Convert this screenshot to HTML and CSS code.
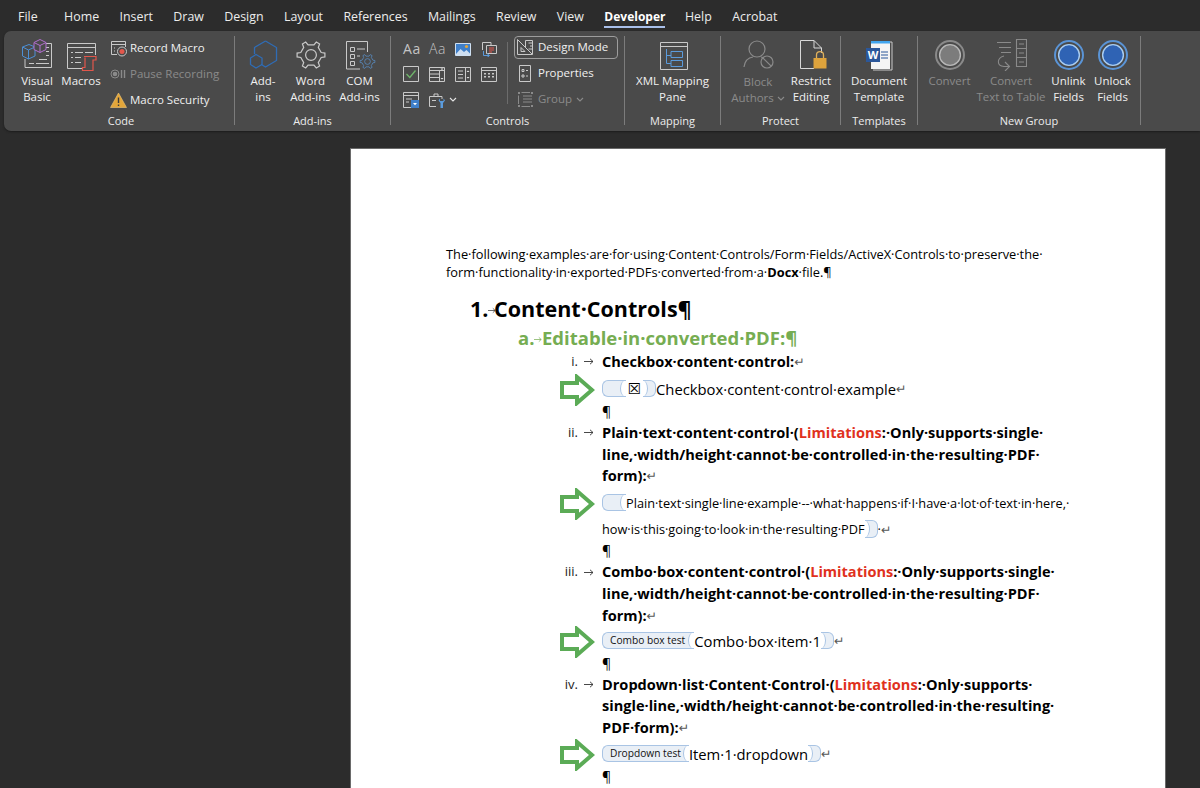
FILE: index.html
```html
<!DOCTYPE html>
<html lang="en">
<head>
<meta charset="utf-8">
<title>Developer ribbon</title>
<link rel="stylesheet" href="styles.css">
</head>
<body>
<svg class="defs" width="0" height="0" aria-hidden="true">
  <symbol id="gear" viewBox="-16 -16 32 32">
    <polygon points="10.2,-2.5 13.9,-1.9 13.9,1.9 10.2,2.5 7.27,7.58 8.6,11.09 5.3,12.99 2.94,10.08 -2.94,10.08 -5.3,12.99 -8.6,11.09 -7.27,7.58 -10.2,2.5 -13.9,1.9 -13.9,-1.9 -10.2,-2.5 -7.27,-7.58 -8.6,-11.09 -5.3,-12.99 -2.94,-10.08 2.94,-10.08 5.3,-12.99 8.6,-11.09 7.27,-7.58" fill="none" stroke-width="1.2"/>
    <circle r="5.4" fill="none" stroke-width="1.2"/>
  </symbol>
  <symbol id="arrow" viewBox="0 0 36 32">
    <path d="M3 9H18V3L33 16 18 29V23H3Z" fill="#fff" stroke="#5bab56" stroke-width="4" stroke-linejoin="miter"/>
  </symbol>
  <symbol id="field" viewBox="0 0 32 32">
    <circle cx="16" cy="16" r="14" fill="none" stroke-width="2"/>
    <circle class="ring" cx="16" cy="16" r="10.4" stroke-width="1.4"/>
  </symbol>
  <symbol id="tabmark" viewBox="0 0 10 7">
    <path d="M0 3.500H9M6 .8 9 3.500 6 6.200" fill="none" stroke="currentColor" stroke-width=".9"/>
  </symbol>
</svg>

<nav class="tabs">
  <span class="tab tab-file">File</span><span class="tab">Home</span><span class="tab">Insert</span><span class="tab">Draw</span><span class="tab">Design</span><span class="tab">Layout</span><span class="tab">References</span><span class="tab">Mailings</span><span class="tab">Review</span><span class="tab">View</span><span class="tab tab-active">Developer</span><span class="tab">Help</span><span class="tab">Acrobat</span>
</nav>

<section class="ribbon">
  <div class="group g-code">
    <div class="group-body">
      <div class="big b-44">
        <svg class="ico" viewBox="0 0 32 32"><g fill="none" stroke="#c9c9c9"><path d="M14 4.500H30.500V28.500H4V20"/><path d="M8 24.500h5M15 24.500h13M18 20.500h8M25 16.500h3M25 12.500h3M25 8.500h3"/></g><g fill="#4a4a4a" stroke="#4d8fd4"><path d="M1.500 8 8 5.500 14 8V17L7.500 20 1.500 17Z"/><path d="M1.500 8 7.500 11 14 8M7.500 11V20"/></g><g fill="#4a4a4a" stroke="#b26fd0"><path d="M13 3.500 19 .5 25 3.500V10.500L19 13.500 13 10.500Z"/><path d="M13 3.500 19 6.500 25 3.500M19 6.500V13.500"/></g></svg>
        <span>Visual<br>Basic</span>
      </div>
      <div class="big b-44">
        <svg class="ico" viewBox="0 0 32 32"><g fill="none" stroke="#c9c9c9"><path d="M2.500 4.500H30.500V16M2.500 8.500H30.500M2.500 4.500V29.500H17"/><path d="M6 13.500h2M10 13.500h8M20 13.500h8M6 18.500h2M10 18.500h6M6 23.500h2M10 23.500h6"/></g><path d="M19 17.500H31V21H28V31.500H17.500V28.500H20V18.500" fill="#4a4a4a" stroke="#e2574c" stroke-width="1.200"/></svg>
        <span>Macros</span>
      </div>
      <div class="stack s-code">
        <div class="small"><svg class="ico-s" viewBox="0 0 17 17"><path d="M1.500 14.500V1.500H15.500V7M1.500 4.500H15.500M1.500 14.500H7M4 8h1M4 11h1" fill="none" stroke="#c9c9c9"/><circle cx="12" cy="11.500" r="4.500" fill="#4a4a4a" stroke="#c9c9c9"/><circle cx="12" cy="11.500" r="2.500" fill="#e2574c"/></svg><span>Record Macro</span></div>
        <div class="small off"><svg class="ico-s" viewBox="0 0 17 17"><circle cx="5" cy="8" r="4" fill="none" stroke="#8a8a8a"/><circle cx="5" cy="8" r="2.300" fill="#8a8a8a"/><path d="M11.500 4V12M14.500 4V12" stroke="#8a8a8a" stroke-width="1.400"/></svg><span>Pause Recording</span></div>
        <div class="small"><svg class="ico-s" viewBox="0 0 17 17"><path d="M8.500 1 16.500 15.500H.5Z" fill="#e3a63a" stroke="#f0c878" stroke-width=".6"/><path d="M8.500 5.500V11M8.500 12.500V14" stroke="#3a3a3a" stroke-width="1.400"/></svg><span>Macro Security</span></div>
      </div>
    </div>
    <div class="group-label label-code">Code</div>
  </div>

  <div class="group g-addins">
    <div class="group-body">
      <div class="big b-46">
        <svg class="ico" viewBox="0 0 32 32"><g fill="none" stroke="#2f6cb5" stroke-width="1.300"><path d="M18.500 2 29.500 8.500V21.500L18.500 28 14 25.300M7.500 15V8.500L18.500 2"/><path d="M9 15.500 15 19V25.500L9 29 3.500 25.500V19Z"/></g></svg>
        <span>Add-<br>ins</span>
      </div>
      <div class="big b-50">
        <svg class="ico gear-w" viewBox="0 0 32 32"><use href="#gear"/></svg>
        <span>Word<br>Add-ins</span>
      </div>
      <div class="big b-50">
        <svg class="ico" viewBox="0 0 32 32"><path d="M16 30H2.500V2.500H23.500V13" fill="none" stroke="#c9c9c9"/><path d="M6.500 8.500h4v4h-4zM6.500 15.500h4v4h-4zM6.500 22.500h4v4h-4zM13 10h8M13 17h3" fill="none" stroke="#c9c9c9"/><svg x="15" y="14" width="17" height="17" viewBox="-16 -16 32 32" class="gear-b"><use href="#gear" x="-16" y="-16" width="32" height="32"/></svg></svg>
        <span>COM<br>Add-ins</span>
      </div>
    </div>
    <div class="group-label">Add-ins</div>
  </div>

  <div class="group g-controls">
    <div class="group-body">
      <div class="ctl-grid">
        <span class="aa">Aa</span>
        <span class="aa aa-thin">Aa</span>
        <svg class="ico-c" viewBox="0 0 16 16"><path d="M.5 2.500H15.500V14.500H.5Z" fill="#3f7fc9" stroke="#cfe0f2"/><path d="M1 13 5.500 8 9 11 11.500 9 15 12.500V14H1Z" fill="#fff" opacity=".75"/><circle cx="11.500" cy="5.500" r="1.600" fill="#e3a63a"/></svg>
        <svg class="ico-c" viewBox="0 0 16 16"><path d="M1.500 9V1.500H10V4" fill="none" stroke="#c9c9c9"/><path d="M5.500 4.500H15.500V12.500H5.500Z" fill="none" stroke="#c9c9c9"/><path d="M8 7h5M8 9h5M8 11h3" stroke="#e2574c"/><path d="M2.500 10V14.500H8M6 12.500 8.500 14.500 6 16.500" fill="none" stroke="#5b9bdc"/></svg>
        <svg class="ico-c" viewBox="0 0 16 16"><path d="M.5 .5H15.500V15.500H.5Z" fill="none" stroke="#c9c9c9"/><path d="M3.500 8 6.800 11.500 12.500 4.500" fill="none" stroke="#6fb56a" stroke-width="1.300"/></svg>
        <svg class="ico-c" viewBox="0 0 16 16"><path d="M.5 1.500H15.500V15.500H.5ZM.5 4.500H15.500M10.500 4.500V15.500M.5 8H10.500M.5 11.500H10.500" fill="none" stroke="#c9c9c9"/><path d="M11.500 2.500h3l-1.500 1.500zM11.500 12h3l-1.500 1.500z" fill="#e6e6e6"/></svg>
        <svg class="ico-c" viewBox="0 0 16 16"><path d="M.5 1.500H15.500V15.500H.5ZM10.500 1.500V15.500M3 5h5M3 8.500h5M3 12h5" fill="none" stroke="#c9c9c9"/><path d="M11.500 6h3L13 4.500zM11.500 11h3L13 12.500z" fill="#e6e6e6"/></svg>
        <svg class="ico-c" viewBox="0 0 16 16"><path d="M.5 1.500H15.500V15.500H.5ZM.5 4.500H15.500" fill="none" stroke="#c9c9c9"/><path d="M3 7h2v1.500H3zM7 7h2v1.500H7zM11 7h2v1.500h-2zM3 10h2v1.500H3zM7 10h2v1.500H7zM11 10h2v1.500h-2z" fill="#c9c9c9"/></svg>
        <svg class="ico-c" viewBox="0 0 16 16"><path d="M.5 .5H15.500V8M.5 3.500H15.500M.5 .5V15.500H8M3 7h6M3 10h3" fill="none" stroke="#c9c9c9"/><path d="M8 8h8v8H8z" fill="#3f7fc9"/><path d="M10 11h4l-2 2.200z" fill="#fff"/></svg>
        <div class="tools">
          <svg class="ico-c" viewBox="0 0 16 16"><path d="M.5 4.500H13V7M.5 4.500V14.500H7M5 4.500V2H9V4.500M3 8.500h4" fill="none" stroke="#c9c9c9"/><path d="M11 6.500 9.500 8.500 11.500 11V16H14V11L16 8.500 14.500 6.500V9H11Z" fill="#5b9bdc"/></svg>
          <svg class="chev" viewBox="0 0 8 5"><path d="M1 1 4 4 7 1" fill="none" stroke="#e6e6e6" stroke-width="1.100"/></svg>
        </div>
      </div>
      <div class="vsep"></div>
      <div class="stack s-ctl">
        <div class="small design"><svg class="ico-s" viewBox="0 0 17 17"><path d="M.5 .5 15.500 15.500H.5Z M4 8.500V12.500H8Z" fill="none" stroke="#c9c9c9"/><path d="M8.500 1.500H15.500V15M8.500 1.500V9" fill="none" stroke="#c9c9c9"/><path d="M11.500 4h4M13 7h2.500M11.500 10h4" stroke="#c9c9c9"/></svg><span>Design Mode</span></div>
        <div class="small"><svg class="ico-s" viewBox="0 0 17 17"><path d="M2.500 .5H13.500V16.500H2.500Z" fill="none" stroke="#c9c9c9"/><path d="M5 4.500h2v2H5zM5 10h2v2H5zM9 5.500h2M9 11h2" fill="none" stroke="#c9c9c9"/></svg><span>Properties</span></div>
        <div class="small off"><svg class="ico-s" viewBox="0 0 17 17"><path d="M1 1h2v2H1zM14 1h2v2h-2zM1 14h2v2H1zM14 14h2v2h-2z" fill="#8a8a8a"/><path d="M4.500 1.500H13M1.500 4.500V13M4.500 15.500H13M6 5h9M6 8h9M6 11h9" stroke="#8a8a8a" fill="none"/></svg><span>Group</span><svg class="chev" viewBox="0 0 8 5"><path d="M1 1 4 4 7 1" fill="none" stroke="#8a8a8a" stroke-width="1.100"/></svg></div>
      </div>
    </div>
    <div class="group-label">Controls</div>
  </div>

  <div class="group g-map">
    <div class="group-body">
      <div class="big b-96">
        <svg class="ico" viewBox="0 0 32 32"><path d="M3.500 3.500H30.500V30.500H3.500ZM3.500 7.500H30.500" fill="none" stroke="#c9c9c9"/><path d="M9.500 10V24.500H14M9.500 16.500H14" fill="none" stroke="#5b9bdc"/><path d="M14 12.500H25.500V18.500H14ZM14 21.500H25.500V27.500H14Z" fill="none" stroke="#5b9bdc"/></svg>
        <span>XML Mapping<br>Pane</span>
      </div>
    </div>
    <div class="group-label">Mapping</div>
  </div>

  <div class="group g-protect">
    <div class="group-body">
      <div class="big b-61 off">
        <svg class="ico" viewBox="0 0 32 32"><g fill="none" stroke="#8a8a8a" stroke-width="1.200"><circle cx="15" cy="10" r="8"/><path d="M2 28C3 21 7 18.500 11 18M19 18C20 18.200 21 18.500 22 19"/><circle cx="25" cy="23" r="6"/><path d="M20.800 18.800 29.200 27.200"/></g></svg>
        <span class="pad-line">Block<br>Authors <svg class="chev" viewBox="0 0 8 5"><path d="M1 1 4 4 7 1" fill="none" stroke="#8a8a8a" stroke-width="1.100"/></svg></span>
      </div>
      <div class="big b-46">
        <svg class="ico" viewBox="0 0 32 32"><path d="M19 29.500H5.500V1.500H19L26.500 9V14M19 1.500V9H26.500" fill="none" stroke="#d8d8d8"/><path d="M18.500 19H31.500V29.500H18.500Z" fill="#dea33c"/><path d="M21.500 19V16C21.500 11.500 28.500 11.500 28.500 16V19" fill="none" stroke="#e0b15c" stroke-width="1.300"/></svg>
        <span>Restrict<br>Editing</span>
      </div>
    </div>
    <div class="group-label">Protect</div>
  </div>

  <div class="group g-tmpl">
    <div class="group-body">
      <div class="big b-77">
        <svg class="ico" viewBox="0 0 32 32"><path d="M8 8V2H27V30H8Z" fill="#f4f4f4"/><path d="M8 2H27V4.500H8Z" fill="#41a5ee"/><path d="M27 3h2V31H10" fill="none" stroke="#c9c9c9"/><path d="M18 13h7M18 16h7M18 19h7" stroke="#2b579a"/><path d="M3 9H17V23H3Z" fill="#2b579a"/><text x="10" y="20" class="word-w">W</text></svg>
        <span>Document<br>Template</span>
      </div>
    </div>
    <div class="group-label">Templates</div>
  </div>

  <div class="group g-new">
    <div class="group-body">
      <div class="big b-63 off">
        <svg class="ico field-off" viewBox="0 0 32 32"><use href="#field"/></svg>
        <span>Convert</span>
      </div>
      <div class="big b-68 off">
        <svg class="ico" viewBox="0 0 32 32"><g fill="none" stroke="#8a8a8a" stroke-width="1.100"><path d="M2 3.500H16M4 8.500H16M6 13.500H16"/><path d="M21.500 .5H31.500V27.500H21.500ZM21.500 9.500H31.500M21.500 18.500H31.500M24 5h5M24 14h5M24 23h5"/><path d="M9 17C1.500 19 1.500 27 9 27.500H14M10 23 14.500 27.500 10 32"/></g></svg>
        <span>Convert<br><span class="nowrap">Text to Table</span></span>
      </div>
      <div class="big b-unlink">
        <svg class="ico field-on" viewBox="0 0 32 32"><use href="#field"/></svg>
        <span>Unlink<br>Fields</span>
      </div>
      <div class="big b-44">
        <svg class="ico field-on" viewBox="0 0 32 32"><use href="#field"/></svg>
        <span>Unlock<br>Fields</span>
      </div>
    </div>
    <div class="group-label">New Group</div>
  </div>
</section>

<main class="canvas">
  <article class="page">
    <p class="intro">The·following·examples·are·for·using·Content·Controls/Form·Fields/ActiveX·Controls·to·preserve·the·</p>
    <p class="intro">form·functionality·in·exported·PDFs·converted·from·a·<b>Docx</b>·file.¶</p>

    <h1 class="h1"><span class="n1">1.<svg class="tm tm-h"><use href="#tabmark"/></svg></span>Content·Controls¶</h1>
    <h2 class="h2"><span class="n2">a.<svg class="tm tm-h"><use href="#tabmark"/></svg></span>Editable·in·converted·PDF:¶</h2>

    <div class="li li-1"><span class="num">i.</span><svg class="tm tm-li"><use href="#tabmark"/></svg><b>Checkbox·content·control:</b><i class="ret">↵</i></div>
    <div class="cc cc-1">
      <svg class="arr"><use href="#arrow"/></svg>
      <span class="cap cap-l cap-24"></span><span class="boxed">☒</span><span class="cap cap-r"></span><span class="cc-t">Checkbox·content·control·example</span><i class="ret">↵</i>
    </div>
    <div class="pm pm-t">¶</div>

    <div class="li li-2"><span class="num">ii.</span><svg class="tm tm-li"><use href="#tabmark"/></svg><b>Plain·text·content·control·(<em>Limitations</em>:·Only·supports·single·</b></div>
    <div class="li cont"><b>line,·width/height·cannot·be·controlled·in·the·resulting·PDF·</b></div>
    <div class="li cont"><b>form):</b><i class="ret">↵</i></div>
    <div class="cc2 cc2-a">
      <svg class="arr"><use href="#arrow"/></svg>
      <span class="cap cap-l cap-24"></span><span class="small-t">Plain·text·single·line·example·--·what·happens·if·I·have·a·lot·of·text·in·here,·</span>
    </div>
    <div class="cc2 cc2-b"><span class="small-t">how·is·this·going·to·look·in·the·resulting·PDF</span><span class="cap cap-r cap-s"></span><span class="small-t">·</span><i class="ret">↵</i></div>
    <div class="pm pm-b">¶</div>

    <div class="li li-3"><span class="num">iii.</span><svg class="tm tm-li"><use href="#tabmark"/></svg><b>Combo·box·content·control·(<em>Limitations</em>:·Only·supports·single·</b></div>
    <div class="li cont"><b>line,·width/height·cannot·be·controlled·in·the·resulting·PDF·</b></div>
    <div class="li cont"><b>form):</b><i class="ret">↵</i></div>
    <div class="cc cc-3">
      <svg class="arr"><use href="#arrow"/></svg>
      <span class="cap cap-l cap-tag"><span class="tag">Combo box test</span></span><span class="cc-t">Combo·box·item·1</span><span class="cap cap-r"></span><i class="ret">↵</i>
    </div>
    <div class="pm pm-t">¶</div>

    <div class="li li-4"><span class="num">iv.</span><svg class="tm tm-li"><use href="#tabmark"/></svg><b>Dropdown·list·Content·Control·(<em>Limitations</em>:·Only·supports·</b></div>
    <div class="li cont"><b>single·line,·width/height·cannot·be·controlled·in·the·resulting·</b></div>
    <div class="li cont"><b>PDF·form):</b><i class="ret">↵</i></div>
    <div class="cc cc-4">
      <svg class="arr"><use href="#arrow"/></svg>
      <span class="cap cap-l cap-tag cap-tag-d"><span class="tag">Dropdown test</span></span><span class="cc-t">Item·1·dropdown</span><span class="cap cap-r"></span><i class="ret">↵</i>
    </div>
    <div class="pm pm-t">¶</div>
  </article>
</main>
</body>
</html>
```
FILE: styles.css
```css
* { box-sizing: border-box; }
html, body { margin: 0; height: 788px; overflow: hidden; }
body {
  background: #2c2c2c;
  color: #f0f0f0;
  font-family: "Open Sans", "Noto Sans", sans-serif;
  font-size: 12px;
  display: flex;
  flex-direction: column;
}
.defs { display: block; height: 0; }

/* tabs */
.tabs {
  height: 31px;
  display: flex;
  align-items: stretch;
  padding-left: 18px;
  font-size: 12.400px;
  color: #ececec;
  flex: none;
}
.tab { line-height: 33px; margin-right: 20.400px; position: relative; white-space: nowrap; }
.tab-file { margin-right: 26.500px; }
.tab-active { font-weight: 700; color: #fff; font-size: 12px; margin-right: 19.500px; }
.tab-active::after {
  content: "";
  display: block;
  height: 2px;
  background: #a9bfe9;
  margin-top: -7px;
  position: relative;
}

/* ribbon */
.ribbon {
  flex: none;
  height: 100px;
  margin-left: 4px;
  background: #4a4a4a;
  border-radius: 7px 0 0 7px;
  display: flex;
  padding: 5px 0 6px;
  box-shadow: 0 1px 2px #1c1c1c;
}
.group { border-right: 1px solid #7c7c7c; display: flex; flex-direction: column; flex: none; }
.group-body { height: 79px; display: flex; }
.group-label { height: 10px; line-height: 10px; text-align: center; font-size: 11px; color: #ececec; white-space: nowrap; transform: translateY(1px); }
.label-code { padding-left: 4px; }
.g-code { width: 231px; }
.g-code .group-body { padding-left: 11px; }
.g-addins { width: 156px; }
.g-addins .group-body { padding-left: 5px; }
.g-controls { width: 234px; }
.g-controls .group-body { padding-left: 12px; }
.g-map { width: 96px; }
.g-protect { width: 120px; }
.g-protect .group-body { padding-left: 7px; }
.g-tmpl { width: 77px; }
.g-new { width: 223px; }

.big {
  display: flex;
  flex-direction: column;
  align-items: center;
  text-align: center;
  line-height: 16px;
  font-size: 11.500px;
  white-space: nowrap;
  padding-top: 3px;
  flex: none;
}
.big > span { margin-top: 2px; }
.ico { width: 32px; height: 32px; display: block; }
.b-44 { width: 44px; }
.b-46 { width: 46px; }
.b-50 { width: 49px; }
.b-96 { width: 95px; }
.b-77 { width: 76px; }
.b-61 { width: 60px; }
.b-63 { width: 63px; }
.b-68 { width: 60px; }
.b-unlink { width: 44px; margin-left: 5.500px; }
.off { color: #8b8b8b; }
.pad-line { padding-top: 1px; }
.nowrap { white-space: nowrap; }

.stack { display: flex; flex-direction: column; gap: 2px; }
.s-code { margin-left: 7px; }
.s-ctl { margin-left: 6px; width: 104px; }
.small { height: 24px; display: flex; align-items: center; gap: 3px; font-size: 11.500px; white-space: nowrap; }
.small > span { margin-top: -2px; }
.ico-s { width: 17px; height: 17px; flex: none; }
.design { border: 1px solid #9d9d9d; border-radius: 4px; padding-left: 2px; height: 23px; gap: 4px; }
.s-ctl .small:not(.design) { padding-left: 3px; gap: 4px; }
.chev { width: 8px; height: 5px; display: inline-block; vertical-align: middle; }

.ctl-grid {
  width: 104px;
  display: grid;
  grid-template-columns: repeat(4, 26px);
  grid-auto-rows: 25.500px;
  align-items: center;
  justify-items: start;
}
.ico-c { width: 16px; height: 16px; display: block; }
.aa { font-size: 14px; color: #c4c4c4; letter-spacing: .6px; line-height: 24px; }
.aa-thin { font-weight: 300; }
.tools { display: flex; align-items: center; gap: 4px; grid-column: span 2; }
.vsep { width: 1px; height: 62px; background: #6c6c6c; margin-top: 6px; flex: none; }
.gear-w { stroke: #c9c9c9; }
.gear-b { stroke: #5b9bdc; }
.field-off { stroke: #8a8a8a; fill: #7c7c7c; --ring: #b8b8b8; }
.field-on { stroke: #5a94d6; fill: #2f63b4; --ring: #a9cdf0; }
.ring { stroke: var(--ring); }
.word-w { font: 700 11px "Open Sans", sans-serif; fill: #fff; text-anchor: middle; }

/* document */
.canvas { flex: 1; min-height: 0; padding: 17px 34px 0 350px; }
.page {
  height: 660px;
  background: #fff;
  color: #000;
  border: 1px solid #6a6a6a;
  padding: 96px 0 0 95px;
  overflow: hidden;
  font-size: 12.800px;
}
p { margin: 0; }
.intro { height: 18px; line-height: 18px; white-space: nowrap; }
.h1, .h2 { margin: 0; white-space: nowrap; font-weight: 700; }
.h1 { height: 28px; line-height: 28px; font-size: 21.500px; margin: 14px 0 0 24px; display: flex; }
.h2 { height: 24px; line-height: 24px; font-size: 18.500px; margin: 3px 0 0 72px; color: #76ad52; display: flex; }
.n1, .n2 { display: flex; align-items: center; width: 24px; flex: none; }
.tm { flex: none; color: #333; }
.tm-h { width: 8px; height: 7px; margin-top: 3px; }
.n2 .tm-h { color: #76ad52; }
.tm-li { width: 10px; height: 7px; align-self: center; margin-right: 8px; }

.li { height: 21.800px; line-height: 21.800px; font-size: 14.550px; padding-left: 114px; display: flex; white-space: nowrap; }
.li-1 { margin-top: 1px; }
.li-2 { margin-top: 3px; }
.li-3 { margin-top: 2px; }
.li-4 { margin-top: 3px; }
.cont { padding-left: 156px; }
.li b { font-weight: 700; }
em { font-style: normal; color: #e0311d; }
.num { width: 18px; font-weight: 400; text-align: right; flex: none; margin-right: 6px; color: #222; font-size: 13px; }
.ret { font-style: normal; color: #555; font-size: 12.500px; font-family: "DejaVu Sans", sans-serif; }

.cc { height: 30px; padding-left: 114px; display: flex; align-items: center; white-space: nowrap; font-size: 14.800px; }
.cc-1 { margin-top: 1px; }
.cc-3 { margin-top: -1px; }
.cc-4 { margin-top: 0; }
.arr { width: 36px; height: 32px; flex: none; margin: 2px 7px 0 -1px; }
.cap {
  position: relative;
  display: inline-block;
  height: 17px;
  background: #e9eff6;
  border: 1px solid #a9c4e4;
  flex: none;
  overflow: hidden;
}
.cap-l { border-right: 0; border-radius: 6px 0 0 6px; padding-right: 6px; }
.cap-l::after {
  content: "";
  position: absolute;
  right: -1px; top: -1px; bottom: -1px;
  width: 6px;
  background: #fff;
  border-left: 1px solid #a9c4e4;
  border-radius: 6px 0 0 6px / 50%;
}
.cap-r { width: 13px; border-left: 0; border-radius: 0 6px 6px 0; }
.cap-r::before {
  content: "";
  position: absolute;
  left: -1px; top: -1px; bottom: -1px;
  width: 5px;
  background: #fff;
  border-right: 1px solid #a9c4e4;
  border-radius: 0 6px 6px 0 / 50%;
}
.cap-s { height: 18px; }
.cap-24 { width: 24px; }
.boxed { width: 17px; text-align: center; font-family: "DejaVu Sans", sans-serif; font-size: 15px; flex: none; }
.cap-tag { height: 17px; padding-right: 7px; }
.cap-tag-d { padding-right: 6px; }
.tag { display: block; font-size: 10.200px; line-height: 14px; padding: 0 2px 0 7px; color: #111; }

.cc2 { display: flex; align-items: center; white-space: nowrap; height: 25px; }
.cc2-a { padding-left: 114px; margin-top: 3px; }
.cc2-b { padding-left: 156px; height: 28px; }
.small-t { font-size: 12.750px; }

.pm { height: 14px; line-height: 14px; padding-left: 156px; font-size: 14px; }
.pm-b { height: 16px; line-height: 16px; }
.pm-t { margin-top: 1px; }
```
